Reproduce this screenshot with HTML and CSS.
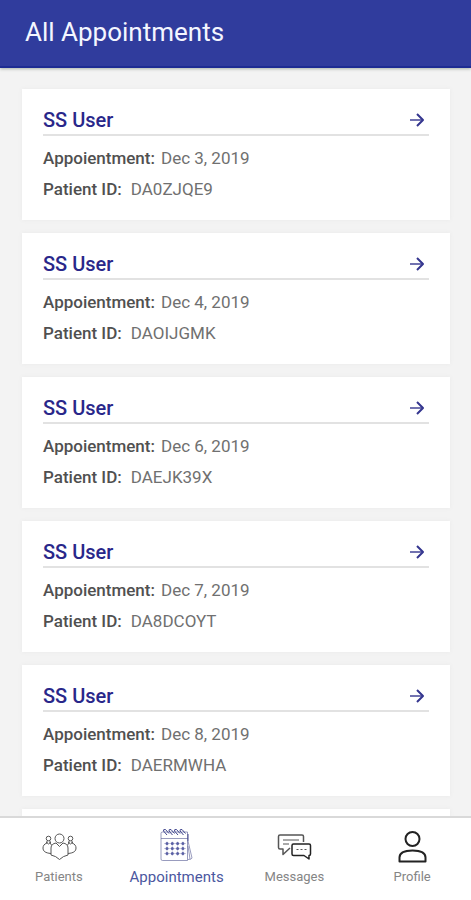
FILE: index.html
```html
<!DOCTYPE html>
<html lang="en">
<head>
<meta charset="utf-8">
<meta name="viewport" content="width=device-width, initial-scale=1">
<title>All Appointments</title>
<link rel="stylesheet" href="styles.css">
</head>
<body>
<svg class="defs" aria-hidden="true">
  <symbol id="arrow" viewBox="0 0 16 16"><path d="M1 8H14" opacity=".7"/><path d="M8 2L14 8L8 14"/></symbol>
</svg>
<header class="topbar"><h1>All Appointments</h1></header>
<main class="list">
  <article class="card">
    <div class="card-head"><h2>SS User</h2><a href="#" aria-label="Open appointment"><svg class="arrow"><use href="#arrow"/></svg></a></div>
    <dl><div class="row"><dt>Appoientment:</dt><dd>Dec 3, 2019</dd></div><div class="row row-id"><dt>Patient ID:</dt><dd>DA0ZJQE9</dd></div></dl>
  </article>
  <article class="card">
    <div class="card-head"><h2>SS User</h2><a href="#" aria-label="Open appointment"><svg class="arrow"><use href="#arrow"/></svg></a></div>
    <dl><div class="row"><dt>Appoientment:</dt><dd>Dec 4, 2019</dd></div><div class="row row-id"><dt>Patient ID:</dt><dd>DAOIJGMK</dd></div></dl>
  </article>
  <article class="card">
    <div class="card-head"><h2>SS User</h2><a href="#" aria-label="Open appointment"><svg class="arrow"><use href="#arrow"/></svg></a></div>
    <dl><div class="row"><dt>Appoientment:</dt><dd>Dec 6, 2019</dd></div><div class="row row-id"><dt>Patient ID:</dt><dd>DAEJK39X</dd></div></dl>
  </article>
  <article class="card">
    <div class="card-head"><h2>SS User</h2><a href="#" aria-label="Open appointment"><svg class="arrow"><use href="#arrow"/></svg></a></div>
    <dl><div class="row"><dt>Appoientment:</dt><dd>Dec 7, 2019</dd></div><div class="row row-id"><dt>Patient ID:</dt><dd>DA8DCOYT</dd></div></dl>
  </article>
  <article class="card">
    <div class="card-head"><h2>SS User</h2><a href="#" aria-label="Open appointment"><svg class="arrow"><use href="#arrow"/></svg></a></div>
    <dl><div class="row"><dt>Appoientment:</dt><dd>Dec 8, 2019</dd></div><div class="row row-id"><dt>Patient ID:</dt><dd>DAERMWHA</dd></div></dl>
  </article>
  <article class="card"></article>
</main>
<nav class="tabs">
  <a class="tab" href="#">
    <svg class="icon thin" viewBox="0 0 36 36">
      <circle cx="18.500" cy="9.500" r="4.500"/><circle cx="7.500" cy="9.500" r="2.300"/><circle cx="29.500" cy="9.500" r="2.300"/>
      <path d="M15 14L18.500 17.500L22 14C25 14.500 27 16 27 19V26Q22 27 18.500 30.500Q15 27 10 26V19C10 16 12 14.500 15 14Z"/>
      <path d="M6 12V14C3 15 2 17 2 19C2 22 4 24 10 24.500M9 12V14L10.500 16M5 13L7.500 15L10 13M31 12V14C34 15 35 17 35 19C35 22 33 24 27 24.500M28 12V14L26.500 16M27 13L29.500 15L32 13"/>
    </svg>
    <span>Patients</span>
  </a>
  <a class="tab active" href="#" aria-current="page">
    <svg class="icon thin" viewBox="0 0 36 36">
      <path d="M3.500 3H28.500V31.500H3.500Q2 31.500 2 30V4.500Q2 3 3.500 3ZM2 9.500H29" opacity=".6"/>
      <path d="M29 12L33 29Q33 30.500 29 30.500M29 17L31 30" opacity=".6"/>
      <path class="coil" d="M29 5V12"/>
      <path class="coil" d="M8 6L4.500 2Q4 0 6.500 .5L10 4.500M13.500 6L10 2Q9.500 0 12 .5L15.500 4.500M19 6L15.500 2Q15 0 17.500 .5L21 4.500M24.500 6L21 2Q20.500 0 23 .5L26.500 4.500"/>
      <path d="M5 14.500H27M5 19.500H27M5 24.500H27M8 12.500V27M13.300 12.500V27M18.600 12.500V27M23.900 12.500V27" opacity=".3"/>
      <path class="dots" d="M8 14.500H24M8 19.500H24M8 24.500H24"/>
    </svg>
    <span>Appointments</span>
  </a>
  <a class="tab" href="#">
    <svg class="icon bubbles" viewBox="0 0 36 36">
      <path d="M14 19L7 25.500V20H4Q2.500 20 2.500 18.500V7.500Q2.500 6 4 6H26Q27.500 6 27.500 7.500V13"/>
      <path d="M7 11H23" class="light"/><path d="M7 15H13" class="light"/>
      <path class="dark" d="M17.500 15H33Q34.500 15 34.500 16.500V25Q34.500 26.500 33 26.500V30L28 26.500H17.500Q16 26.500 16 25V16.500Q16 15 17.500 15Z"/>
      <path class="ellipsis" d="M20.500 20.500H31"/>
    </svg>
    <span>Messages</span>
  </a>
  <a class="tab" href="#">
    <svg class="icon dark" viewBox="0 0 36 36">
      <circle cx="18.500" cy="10" r="7"/><path d="M5.500 32.500V28.500C5.500 23.500 10 21.500 18.500 21.500S31.500 23.500 31.500 28.500V32.500Z"/>
    </svg>
    <span>Profile</span>
  </a>
</nav>
</body>
</html>
```
FILE: styles.css
```css
* { box-sizing: border-box; }
body {
  margin: 0;
  height: 100vh;
  display: flex;
  flex-direction: column;
  overflow: hidden;
  background: #f3f3f3;
  color: #505050;
  font: 400 17px/24px Roboto, "Liberation Sans", sans-serif;
}
h1, h2, dl, dd { margin: 0; }
a { color: inherit; text-decoration: none; }
svg { fill: none; stroke: currentColor; stroke-linejoin: round; }
.defs { position: absolute; width: 0; height: 0; }
.topbar {
  flex: none;
  padding: 15px 25px 17px;
  background: #303c9d;
  color: #f4f6ff;
  border-bottom: 2px solid #1d2c93;
  box-shadow: 0 1px 3px #a9b2a9;
}
h1 { font-size: 26px; line-height: 34px; font-weight: 400; }
.list {
  flex: 1;
  min-height: 0;
  overflow: hidden;
  display: flex;
  flex-direction: column;
  gap: 13px;
  padding: 21px 21px 0 22px;
}
.card {
  flex: none;
  min-height: 131px;
  padding: 16px 21px 15px;
  background: #fff;
  box-shadow: 0 0 4px #e9e9e9;
}
.card-head {
  display: flex;
  align-items: center;
  justify-content: space-between;
  height: 31px;
  border-bottom: 2px solid #e2e2e2;
  color: #29278a;
}
h2 { font-size: 20px; line-height: 28px; font-weight: 500; }
.card-head a { display: flex; padding-right: 4px; }
.arrow { width: 16px; height: 16px; stroke-width: 2; color: #35368f; }
dl { padding-top: 7px; }
.row { display: flex; gap: 6px; line-height: 31px; }
.row-id { gap: 9px; }
dt { font-weight: 500; font-size: 17px; }
dd { font-size: 17px; color: #707070; }
.tabs {
  flex: none;
  display: grid;
  grid-template-columns: repeat(4, 1fr);
  padding: 11px 0 12px;
  background: #fff;
  border-top: 2px solid #d9d9d9;
}
.tab {
  display: flex;
  flex-direction: column;
  align-items: center;
  gap: 1px;
  font-size: 13px;
  line-height: 22px;
  color: #858585;
}
.icon { width: 36px; height: 36px; stroke-width: 2; color: #555; }
.thin { stroke-width: 1; }
.active { font-size: 15px; color: #4b57a0; }
.active .icon { color: #555a92; }
.coil { stroke: #42478f; }
.dots { stroke: #5a60a5; stroke-width: 3; stroke-linecap: round; stroke-dasharray: 0 5.3; }
.bubbles { stroke-width: 1.5; }
.light { stroke-width: 1; }
.dark { color: #222; stroke: #222; }
.ellipsis { stroke-width: 1; stroke-dasharray: 2 2; }
```
